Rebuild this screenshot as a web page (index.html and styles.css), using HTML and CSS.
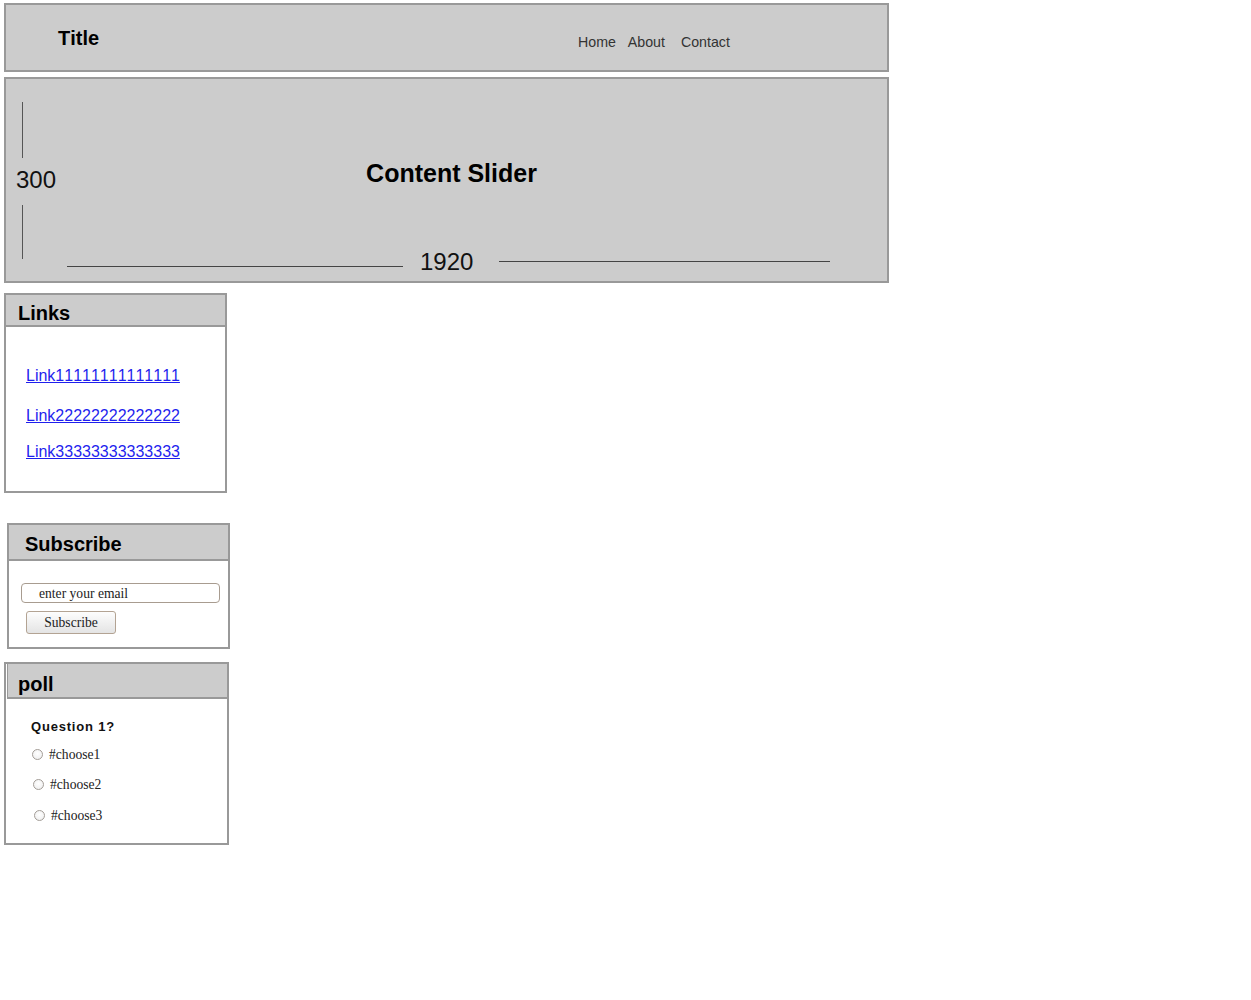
FILE: index.html
```html
<!DOCTYPE html>
<html>
<head>
<meta charset="utf-8">
<title>Layout</title>
<link rel="stylesheet" href="styles.css">
</head>
<body>
<div class="header">
  <div class="title">Title</div>
  <div class="nav"><span class="nav-home">Home</span><span class="nav-about">About</span><span>Contact</span></div>
</div>
<div class="slider">
  <div class="slider-title">Content Slider</div>
  <span class="dim vline vline-top"></span>
  <span class="dim dim-h">300</span>
  <span class="dim vline vline-bottom"></span>
  <span class="dim hline hline-left"></span>
  <span class="dim dim-w">1920</span>
  <span class="dim hline hline-right"></span>
</div>
<div class="box links-box">
  <div class="box-head">Links</div>
  <div class="links">
    <a href="#" class="link">Link11111111111111</a>
    <a href="#" class="link link2">Link22222222222222</a>
    <a href="#" class="link link3">Link33333333333333</a>
  </div>
</div>
<div class="box sub-box">
  <div class="box-head sub-head">Subscribe</div>
  <div class="email">enter your email</div>
  <div class="btn">Subscribe</div>
</div>
<div class="box poll-box">
  <div class="box-head poll-head">poll</div>
  <div class="question">Question 1?</div>
  <div class="opt opt1"><span class="radio"></span><span class="opt-label">#choose1</span></div>
  <div class="opt opt2"><span class="radio"></span><span class="opt-label">#choose2</span></div>
  <div class="opt opt3"><span class="radio"></span><span class="opt-label">#choose3</span></div>
</div>
</body>
</html>
```
FILE: styles.css
```css
html { background: #fff; }
body {
  margin: 0;
  padding: 3px 0 0 4px;
  font-family: "Liberation Sans", Arial, sans-serif;
  font-kerning: none;
  color: #000;
}
.header {
  width: 885px;
  height: 69px;
  box-sizing: border-box;
  border: 2px solid #999;
  background: #ccc;
  display: flex;
  align-items: flex-start;
}
.title {
  width: 572px;
  box-sizing: border-box;
  padding-left: 52px;
  margin-top: 22px;
  font-weight: bold;
  font-size: 20px;
  line-height: 23px;
}
.nav {
  margin-top: 29px;
  font-size: 14.2px;
  line-height: 16px;
  color: #333;
}
.nav-home { margin-right: 12px; }
.nav-about { margin-right: 16px; }

.slider {
  position: relative;
  margin-top: 5px;
  width: 885px;
  height: 206px;
  box-sizing: border-box;
  border: 2px solid #999;
  background: #ccc;
}
.slider-title {
  margin-top: 80px;
  padding-left: 10px;
  text-align: center;
  font-weight: bold;
  font-size: 25px;
  line-height: 29px;
}
.dim { position: absolute; }
.vline { left: 16px; width: 1px; background: #555; }
.vline-top { top: 23px; height: 56px; }
.vline-bottom { top: 126px; height: 54px; }
.hline { height: 1px; background: #444; }
.hline-left { left: 61px; width: 336px; top: 187px; }
.hline-right { left: 493px; width: 331px; top: 182px; }
.dim-h, .dim-w {
  font-size: 24px;
  line-height: 28px;
  color: #111;
}
.dim-h { left: 10px; top: 87px; }
.dim-w { left: 414px; top: 169px; }

.box {
  box-sizing: border-box;
  border: 2px solid #999;
  background: #fff;
}
.box-head {
  background: #ccc;
  border-bottom: 2px solid #999;
  font-weight: bold;
  font-size: 20px;
  line-height: 23px;
  box-sizing: border-box;
}
.links-box {
  margin-top: 10px;
  width: 223px;
  height: 200px;
}
.links-box .box-head {
  height: 32px;
  padding: 7px 0 0 12px;
}
.links {
  display: flex;
  flex-direction: column;
  align-items: flex-start;
  padding-left: 20px;
}
.link {
  display: block;
  font-size: 16px;
  line-height: 18px;
  color: #1f1fee;
  text-decoration: underline;
  margin-top: 40px;
}
.link2 { margin-top: 22px; }
.link3 { margin-top: 18px; }

.sub-box {
  margin-top: 30px;
  margin-left: 3px;
  width: 223px;
  height: 126px;
}
.sub-head {
  height: 36px;
  padding: 8px 0 0 16px;
}
.email {
  margin: 22px 0 0 12px;
  width: 199px;
  height: 20px;
  box-sizing: border-box;
  border: 1px solid #a89c90;
  border-radius: 4px;
  padding-left: 17px;
  font-family: "Liberation Serif", "Times New Roman", serif;
  font-size: 13.6px;
  line-height: 19px;
  color: #222;
}
.btn {
  margin: 8px 0 0 17px;
  width: 90px;
  height: 23px;
  box-sizing: border-box;
  border: 1px solid #b3a393;
  border-radius: 3px;
  background: linear-gradient(#fdfdfd, #e4e4e4);
  text-align: center;
  font-family: "Liberation Serif", "Times New Roman", serif;
  font-size: 13.6px;
  line-height: 22px;
  color: #222;
}

.poll-box {
  margin-top: 13px;
  width: 225px;
  height: 183px;
}
.poll-head {
  height: 35px;
  margin-left: 1px;
  border-left: 1px solid #999;
  padding: 9px 0 0 10px;
}
.question {
  margin: 20px 0 0 25px;
  font-weight: bold;
  font-size: 13px;
  line-height: 15px;
  letter-spacing: 0.8px;
  color: #111;
}
.opt {
  display: flex;
  align-items: center;
  height: 15px;
  margin-left: 26px;
}
.opt1 { margin-top: 13px; }
.opt2 { margin-top: 15px; margin-left: 27px; }
.opt3 { margin-top: 16px; margin-left: 28px; }
.radio {
  width: 11px;
  height: 11px;
  box-sizing: border-box;
  border: 1px solid #a39d97;
  border-radius: 50%;
  background: radial-gradient(circle at 50% 40%, #fff, #ececec);
}
.opt-label {
  margin-left: 6px;
  font-family: "Liberation Serif", "Times New Roman", serif;
  font-size: 13.6px;
  line-height: 15px;
  color: #222;
}
```
